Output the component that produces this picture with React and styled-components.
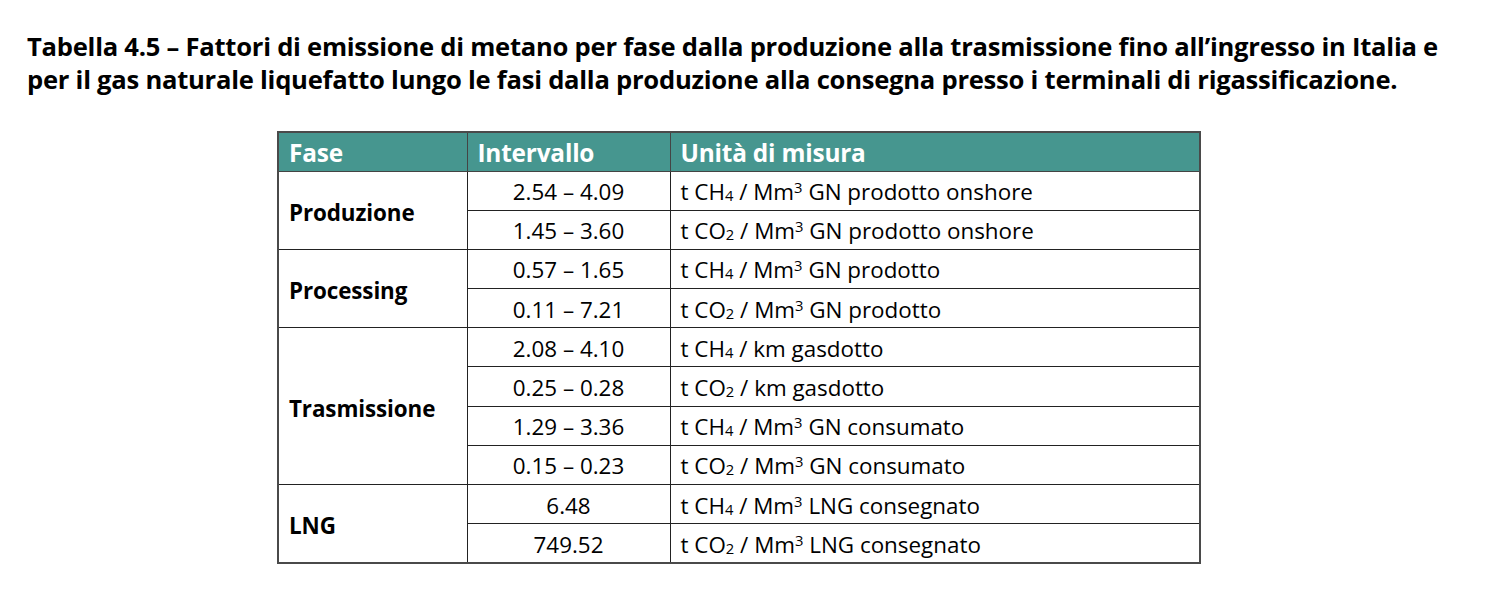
import React from "react";
import styled, { createGlobalStyle } from "styled-components";

const Global = createGlobalStyle`
  html, body { margin: 0; padding: 0; background: #fff; }
  body { font-family: "Open Sans", "Noto Sans", "DejaVu Sans", sans-serif; color: #000; }
`;

const Page = styled.div`
  width: 1500px;
  height: 609px;
  box-sizing: border-box;
  padding: 30px 0 0 27px;
  display: flex;
  flex-direction: column;
`;

const Title = styled.h1`
  margin: 0;
  font-size: 25.6px;
  font-weight: 700;
  line-height: 33px;
  letter-spacing: -0.25px;
  white-space: nowrap;
`;

const TableWrap = styled.div`
  margin: 35px 0 0 250px;
`;

const Table = styled.table`
  border-collapse: collapse;
  width: 922px;
  table-layout: fixed;
  font-size: 22.4px;
  border: 2px solid #4a4a4a;
`;

const Col = styled.col`
  width: ${(p) => p.$w}px;
`;

const HeadRow = styled.tr`
  height: 39px;
`;

const BodyRow = styled.tr`
  height: 39.2px;
`;

const HeadCell = styled.th`
  background: #46968f;
  color: #fff;
  font-weight: 700;
  text-align: left;
  padding: 2px 10px 0;
  border: 1.5px solid #444;
  line-height: 30px;
  font-size: 24.4px;
  letter-spacing: -0.2px;
`;

const PhaseCell = styled.td`
  font-weight: 700;
  padding: 4px 10px 0;
  border: 1.5px solid #222;
  vertical-align: middle;
  letter-spacing: -0.1px;
`;

const ValueCell = styled.td`
  text-align: center;
  padding: 3px 0 0;
  border: 1.5px solid #222;
  line-height: 30px;
`;

const UnitCell = styled.td`
  text-align: left;
  padding: 3px 10px 0;
  border: 1.5px solid #222;
  line-height: 30px;
  border-right-color: #555;
  white-space: nowrap;
`;

const Sub = styled.span`
  font-size: 0.66em;
  vertical-align: -0.08em;
  line-height: 0;
`;

const Sup = styled.span`
  font-size: 0.66em;
  vertical-align: 0.5em;
  line-height: 0;
`;

const CH4 = () => (<>CH<Sub>4</Sub></>);
const CO2 = () => (<>CO<Sub>2</Sub></>);

const groups = [
  {
    phase: "Produzione",
    rows: [
      ["2.54 – 4.09", <>t <CH4 /> / Mm<Sup>3</Sup> GN prodotto onshore</>],
      ["1.45 – 3.60", <>t <CO2 /> / Mm<Sup>3</Sup> GN prodotto onshore</>],
    ],
  },
  {
    phase: "Processing",
    rows: [
      ["0.57 – 1.65", <>t <CH4 /> / Mm<Sup>3</Sup> GN prodotto</>],
      ["0.11 – 7.21", <>t <CO2 /> / Mm<Sup>3</Sup> GN prodotto</>],
    ],
  },
  {
    phase: "Trasmissione",
    rows: [
      ["2.08 – 4.10", <>t <CH4 /> / km gasdotto</>],
      ["0.25 – 0.28", <>t <CO2 /> / km gasdotto</>],
      ["1.29 – 3.36", <>t <CH4 /> / Mm<Sup>3</Sup> GN consumato</>],
      ["0.15 – 0.23", <>t <CO2 /> / Mm<Sup>3</Sup> GN consumato</>],
    ],
  },
  {
    phase: "LNG",
    rows: [
      ["6.48", <>t <CH4 /> / Mm<Sup>3</Sup> LNG consegnato</>],
      ["749.52", <>t <CO2 /> / Mm<Sup>3</Sup> LNG consegnato</>],
    ],
  },
];

export default function App() {
  return (
    <Page>
      <Global />
      <Title>
        Tabella 4.5 – Fattori di emissione di metano per fase dalla produzione alla trasmissione fino all’ingresso in Italia e
        <br />
        per il gas naturale liquefatto lungo le fasi dalla produzione alla consegna presso i terminali di rigassificazione.
      </Title>
      <TableWrap>
        <Table>
          <colgroup>
            <Col $w={189} />
            <Col $w={203} />
            <Col $w={530} />
          </colgroup>
          <thead>
            <HeadRow>
              <HeadCell>Fase</HeadCell>
              <HeadCell>Intervallo</HeadCell>
              <HeadCell>Unità di misura</HeadCell>
            </HeadRow>
          </thead>
          <tbody>
            {groups.map((g) =>
              g.rows.map((r, i) => (
                <BodyRow key={g.phase + i}>
                  {i === 0 && <PhaseCell rowSpan={g.rows.length}>{g.phase}</PhaseCell>}
                  <ValueCell>{r[0]}</ValueCell>
                  <UnitCell>{r[1]}</UnitCell>
                </BodyRow>
              ))
            )}
          </tbody>
        </Table>
      </TableWrap>
    </Page>
  );
}
